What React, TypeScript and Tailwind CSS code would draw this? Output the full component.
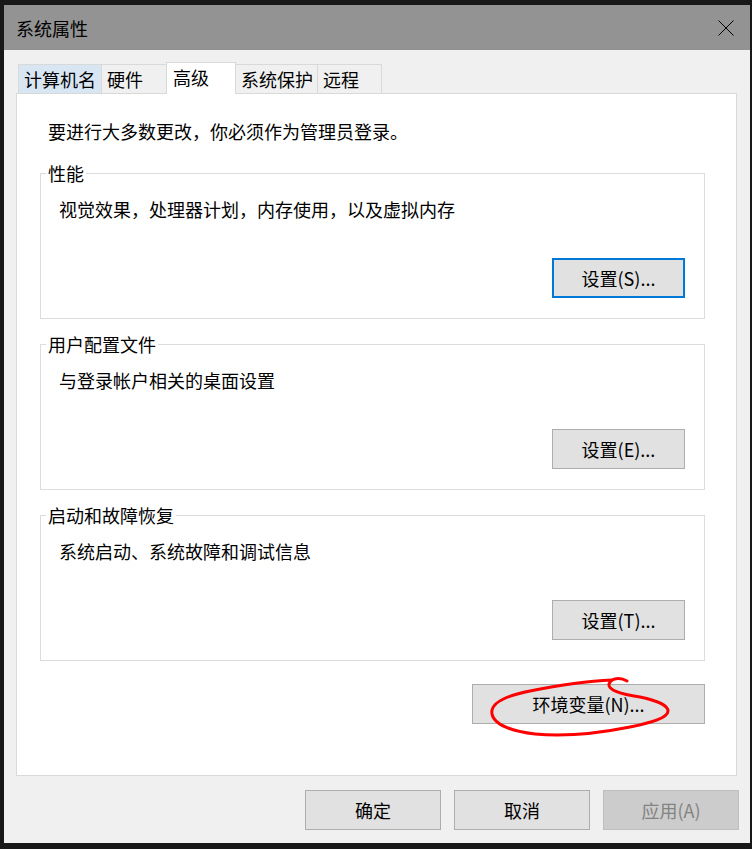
import React from 'react';

const tabs = [
  { label: '计算机名', w: 'w-[84px]', cls: 'ml-[2px] bg-[#d8e6f4]' },
  { label: '硬件', w: 'w-[67px]', cls: '-ml-px bg-[#f0f0f0]' },
  { label: '高级', w: 'w-[70px]', cls: '', active: true },
  { label: '系统保护', w: 'w-[83px]', cls: '-ml-px bg-[#f0f0f0]' },
  { label: '远程', w: 'w-[65px]', cls: '-ml-px bg-[#f0f0f0]' },
];

const groups = [
  { title: '性能', desc: '视觉效果，处理器计划，内存使用，以及虚拟内存', btn: '设置(S)...', focused: true },
  { title: '用户配置文件', desc: '与登录帐户相关的桌面设置', btn: '设置(E)...' },
  { title: '启动和故障恢复', desc: '系统启动、系统故障和调试信息', btn: '设置(T)...' },
];

const Button = ({ children, className = '', focused = false, disabled = false }: { children: React.ReactNode; className?: string; focused?: boolean; disabled?: boolean }) => (
  <button
    className={`h-[40px] flex items-center justify-center leading-[24px] ${
      disabled
        ? 'bg-[#cccccc] border border-[#bfbfbf] text-[#838383]'
        : focused
        ? 'bg-[#e1e1e1] border-2 border-[#0078d7] text-black'
        : 'bg-[#e1e1e1] border border-[#adadad] text-black'
    } ${className}`}
  >
    {children}
  </button>
);

export default function App() {
  return (
    <div className="relative w-[752px] h-[849px] bg-[#181818] overflow-hidden pt-[5px] pl-[4px] font-['Noto_Sans_CJK_SC',sans-serif] text-[18px] text-black">
      <div className="w-[746px] h-[838px] flex flex-col bg-[#f0f0f0]">
        {/* title bar */}
        <div className="h-[45px] bg-[#939393] flex items-center pl-[12px] pr-[16px]">
          <span className="leading-[24px]">系统属性</span>
          <svg className="ml-auto" width="16" height="16" viewBox="0 0 16 16">
            <path d="M0.5 0.5 L15.5 15.5 M15.5 0.5 L0.5 15.5" stroke="#000" strokeWidth="1" fill="none" />
          </svg>
        </div>

        <div className="flex flex-col pt-[12px] pl-[12px] pr-[13px] pb-[13px]">
          {/* tabs */}
          <div className="h-[31px] flex items-end">
            {tabs.map((t) =>
              t.active ? (
                <div
                  key={t.label}
                  className={`relative z-10 -ml-[2px] -mb-px ${t.w} h-[32px] bg-white border-t border-l border-r border-[#d9d9d9] pl-[6px] pt-[2px] leading-[24px]`}
                >
                  {t.label}
                </div>
              ) : (
                <div
                  key={t.label}
                  className={`${t.w} ${t.cls} h-[29px] border-t border-l border-r border-[#d9d9d9] pl-[5px] pt-[2px] leading-[24px]`}
                >
                  {t.label}
                </div>
              )
            )}
          </div>

          {/* panel */}
          <div className="flex flex-col bg-white border border-[#d9d9d9] pt-[25px] pl-[23px] pr-[31px] pb-[51px]">
            <div className="pl-[8px] leading-[24px]">要进行大多数更改，你必须作为管理员登录。</div>

            {groups.map((g, i) => (
              <div
                key={g.title}
                className={`${i === 0 ? 'mt-[30px]' : 'mt-[25px]'} h-[146px] flex flex-col border border-[#dcdcdc] pl-[5px] pr-[19px]`}
              >
                <span className="-mt-[13px] self-start bg-white px-[2px] leading-[24px]">{g.title}</span>
                <div className="mt-[12px] pl-[13px] leading-[24px]">{g.desc}</div>
                <Button className="mt-[37px] self-end w-[133px]" focused={g.focused}>
                  {g.btn}
                </Button>
              </div>
            ))}

            <Button className="mt-[23px] self-end w-[233px]">环境变量(N)...</Button>
          </div>

          {/* dialog buttons */}
          <div className="mt-[14px] -mr-[2px] flex justify-end gap-[13px]">
            <Button className="w-[136px]">确定</Button>
            <Button className="w-[136px]">取消</Button>
            <Button className="w-[136px]" disabled>
              应用(A)
            </Button>
          </div>
        </div>
      </div>

      {/* red annotation */}
      <svg className="absolute inset-0 pointer-events-none" width="752" height="849" viewBox="0 0 752 849">
        <path
          d="M627 681 C620 677, 611 678, 609 684 C608 690, 620 694, 640 697 C655 700, 668 705, 668 711 C668 718, 650 723, 630 727 C600 733, 565 737, 535 734 C510 731, 494 724, 492 714 C490 703, 505 696, 530 691 C560 685, 590 681, 612 680"
          stroke="#ff0000"
          strokeWidth="3"
          fill="none"
          strokeLinecap="round"
        />
      </svg>
    </div>
  );
}
